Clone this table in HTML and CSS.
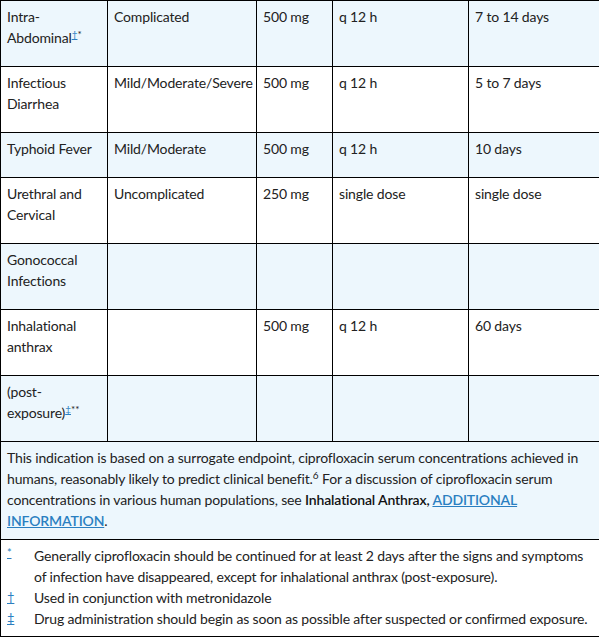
FILE: index.html
```html
<!DOCTYPE html>
<html>
<head>
<meta charset="utf-8">
<link rel="stylesheet" href="styles.css">
</head>
<body>
<table class="dose">
  <colgroup>
    <col class="c1"><col class="c2"><col class="c3"><col class="c4"><col class="c5">
  </colgroup>
  <tbody>
    <tr class="alt">
      <td>Intra-<br>Abdominal<sup><a class="ref" href="#n2">†</a>*</sup></td>
      <td>Complicated</td>
      <td>500 mg</td>
      <td>q 12 h</td>
      <td>7 to 14 days</td>
    </tr>
    <tr>
      <td>Infectious Diarrhea</td>
      <td>Mild/Moderate/Severe</td>
      <td>500 mg</td>
      <td>q 12 h</td>
      <td>5 to 7 days</td>
    </tr>
    <tr class="alt">
      <td>Typhoid Fever</td>
      <td>Mild/Moderate</td>
      <td>500 mg</td>
      <td>q 12 h</td>
      <td>10 days</td>
    </tr>
    <tr>
      <td>Urethral and Cervical</td>
      <td>Uncomplicated</td>
      <td>250 mg</td>
      <td>single dose</td>
      <td>single dose</td>
    </tr>
    <tr class="alt">
      <td>Gonococcal Infections</td>
      <td></td><td></td><td></td><td></td>
    </tr>
    <tr>
      <td>Inhalational anthrax</td>
      <td></td>
      <td>500 mg</td>
      <td>q 12 h</td>
      <td>60 days</td>
    </tr>
    <tr class="alt">
      <td>(post-<br>exposure)<sup><a class="ref" href="#n3">‡</a>**</sup></td>
      <td></td><td></td><td></td><td></td>
    </tr>
    <tr class="alt">
      <td colspan="5" class="note">This indication is based on a surrogate endpoint, ciprofloxacin serum concentrations achieved in humans, reasonably likely to predict clinical benefit.<sup>6</sup> For a discussion of ciprofloxacin serum concentrations in various human populations, see <b>Inhalational Anthrax, </b><a class="info" href="#info">ADDITIONAL INFORMATION</a>.</td>
    </tr>
    <tr>
      <td colspan="5" class="foot">
        <ul class="notes">
          <li><a class="mark star" href="#r1">*</a><span>Generally ciprofloxacin should be continued for at least 2 days after the signs and symptoms of infection have disappeared, except for inhalational anthrax (post-exposure).</span></li>
          <li id="n2"><a class="mark" href="#r2">†</a><span>Used in conjunction with metronidazole</span></li>
          <li id="n3"><a class="mark" href="#r3">‡</a><span>Drug administration should begin as soon as possible after suspected or confirmed exposure.</span></li>
        </ul>
      </td>
    </tr>
  </tbody>
</table>
</body>
</html>
```
FILE: styles.css
```css
html, body {
  margin: 0;
  padding: 0;
  overflow: hidden;
  background: #fff;
}
body {
  font-family: Lato, "Noto Sans", sans-serif;
  font-size: 14px;
  letter-spacing: -0.15px;
  line-height: 21px;
  color: #222;
}
.dose {
  border-collapse: collapse;
  table-layout: fixed;
  width: 601px;
}
.c1 { width: 107px; }
.c2 { width: 149px; }
.c3 { width: 76px; }
.c4 { width: 136px; }
.c5 { width: 133px; }
.dose td {
  border: 1px solid #000;
  padding: 5px 6px 18px 6px;
  vertical-align: top;
  text-align: left;
}
.dose tr.alt td {
  background: #edf7fd;
}
.dose td.note {
  padding: 5px 6px 8px 6px;
}
.dose td.foot {
  padding: 5px 6px 7px 6px;
  background: #fff;
}
sup {
  font-size: 10px;
  line-height: 0;
  vertical-align: 5px;
  letter-spacing: 0;
}
a.ref {
  color: #2a7fc1;
  text-decoration: underline;
}
b {
  font-weight: 600;
  color: #111;
}
a.info {
  color: #2a7fc1;
  font-weight: 600;
  text-decoration: underline;
}
.notes {
  list-style: none;
  margin: 0;
  padding: 0;
}
.notes li {
  display: grid;
  grid-template-columns: 27px 1fr;
}
.mark {
  color: #2a7fc1;
  text-decoration: underline;
  font-size: 13px;
}
.mark.star {
  font-size: 11px;
  line-height: 16px;
}
```
